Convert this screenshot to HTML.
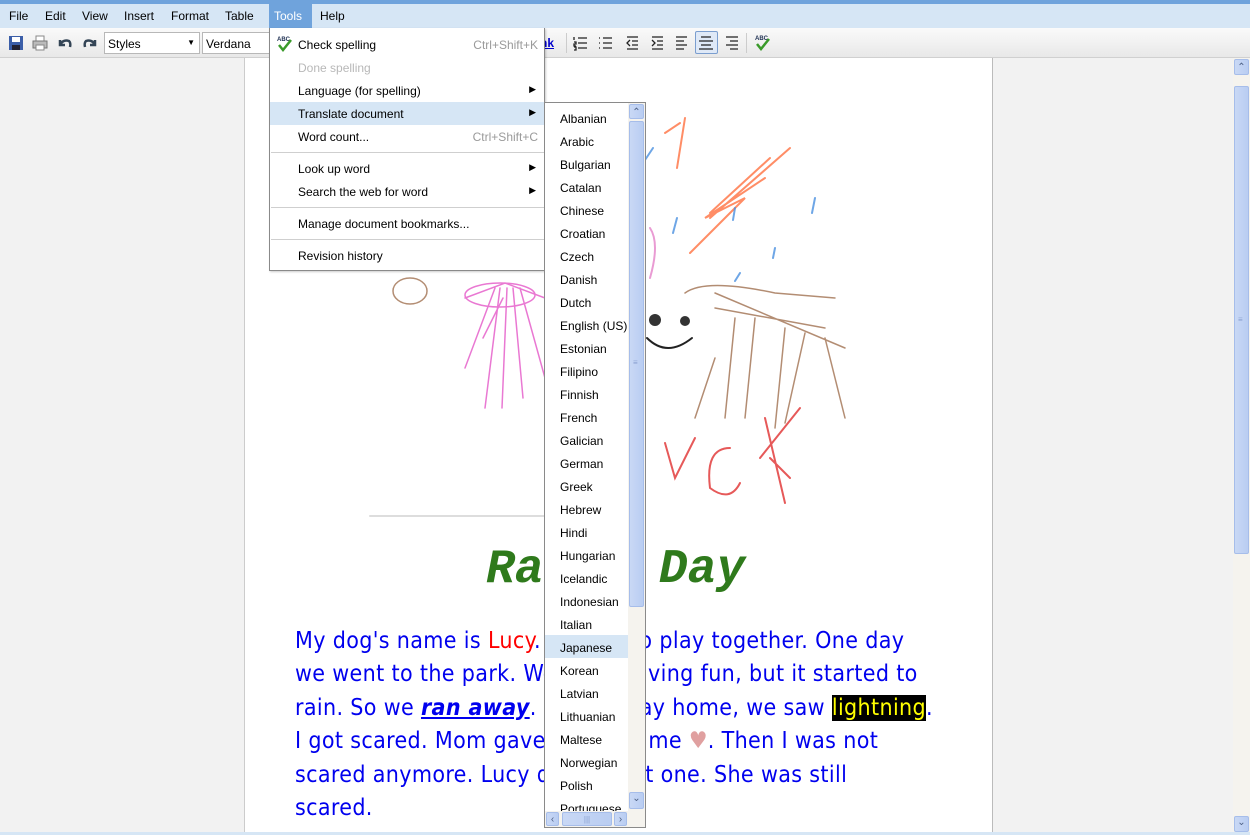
<!DOCTYPE html>
<html><head><meta charset="utf-8">
<style>
*{margin:0;padding:0;box-sizing:border-box}
body{width:1250px;height:835px;overflow:hidden;background:#f2f2f2;font-family:"Liberation Sans",Arial,sans-serif;font-size:12px;color:#000;position:relative}
.abs{position:absolute}
#topline{left:0;top:0;width:1250px;height:4px;background:#6fa3dc}
#menubar{left:0;top:4px;width:1250px;height:24px;background:#d6e6f5}
#menubar span{position:absolute;top:5px;font-size:12px}
#toolbar{left:0;top:28px;width:1250px;height:30px;background:linear-gradient(#fafafa,#e8e8e8);border-bottom:1px solid #d0d0d0}
.combo{position:absolute;top:4px;height:22px;background:#fff;border:1px solid #b8b8b8;font-size:12px;padding:4px 3px}
#page{left:244px;top:58px;width:749px;height:777px;background:#fff;border-left:1px solid #ccc;border-right:1px solid #bbb}
#vsb{left:1233px;top:58px;width:17px;height:776px;background:#f5f3ee}
.sbtn{position:absolute;background:linear-gradient(90deg,#c9d8f5,#b9cdf2);border:1px solid #a6bdea;border-radius:2px;color:#4d6185;font-size:10px;text-align:center}
#menu{left:269px;top:28px;width:276px;height:243px;background:#fff;border:1px solid #8a8a8a;border-top:none;box-shadow:1px 1px 2px rgba(0,0,0,.2)}
.mi{position:absolute;left:0;width:274px;height:23px;font-size:12px;padding:5px 0 0 28px}
.mi .sc{position:absolute;right:6px;top:5px;color:#9a9a9a}
.mi .ar{position:absolute;right:8px;top:5px;font-size:9px}
.sep{position:absolute;left:1px;width:273px;height:1px;background:#cfcfcf}
#sub{left:544px;top:102px;width:102px;height:726px;background:#fff;border:1px solid #8a8a8a}
.li{position:absolute;left:0;width:83px;height:23px;padding:6px 0 0 15px;font-size:12px;white-space:nowrap;overflow:hidden}
#text{left:295px;top:625px;width:700px;font-family:"Comic Sans MS","DejaVu Sans Condensed","Liberation Sans Narrow",sans-serif;font-size:23px;line-height:33.4px;color:#0000ee;letter-spacing:0.35px;white-space:nowrap}
#title{left:486px;top:543px;font-family:"Liberation Mono","Courier New",monospace;font-weight:bold;font-style:italic;font-size:48px;color:#2f7a1c}
</style></head><body>
<div id="topline" class="abs"></div>
<div id="menubar" class="abs">
<span style="left:9px">File</span><span style="left:45px">Edit</span><span style="left:82px">View</span><span style="left:124px">Insert</span><span style="left:171px">Format</span><span style="left:225px">Table</span>
<div style="position:absolute;left:269px;top:0;width:43px;height:24px;background:#6fa3dc"></div><span style="left:274px;color:#fff">Tools</span><span style="left:320px">Help</span>
</div>
<div id="toolbar" class="abs">
<svg class="abs" style="left:8px;top:7px" width="16" height="16"><rect x="1" y="1" width="14" height="14" fill="#3b5ea8"/><rect x="4" y="2" width="8" height="5" fill="#fff"/><rect x="4" y="10" width="8" height="5" fill="#223"/></svg>
<svg class="abs" style="left:32px;top:7px" width="16" height="16"><rect x="4" y="1" width="8" height="5" fill="#fff" stroke="#888"/><rect x="1" y="6" width="14" height="7" fill="#bbb" stroke="#777"/><rect x="4" y="10" width="8" height="5" fill="#fff" stroke="#888"/></svg>
<svg class="abs" style="left:57px;top:8px" width="16" height="14"><path d="M3 4 v5 h5 M3 9 Q6 3 12 5 Q14 7 13 11" stroke="#345" stroke-width="2.5" fill="none"/></svg>
<svg class="abs" style="left:82px;top:8px" width="16" height="14"><path d="M13 4 v5 h-5 M13 9 Q10 3 4 5 Q2 7 3 11" stroke="#345" stroke-width="2.5" fill="none"/></svg>
<div class="combo" style="left:104px;width:96px">Styles<span style="position:absolute;right:4px;top:5px;font-size:8px">▼</span></div>
<div class="combo" style="left:202px;width:70px">Verdana</div>
<span class="abs" style="left:540px;top:8px;color:#0000cc;font-weight:bold;text-decoration:underline;font-size:12px">nk</span>
<div class="abs" style="left:566px;top:5px;width:1px;height:20px;background:#ccc"></div>
<svg class="abs" style="left:572px;top:7px" width="170" height="16" stroke="#222" stroke-width="1.3" fill="none">
<path d="M6 3h9M6 8h9M6 13h9M2 2v3M2 7h2v2H2v2h2M2 12h2v3H2"/>
<path d="M31 3h9M31 8h9M31 13h9M27 3h1M27 8h1M27 13h1"/>
<path d="M55 2h11M60 6h6M60 10h6M55 14h11M58 5l-3 3 3 3"/>
<path d="M80 2h11M85 6h6M85 10h6M80 14h11M80 5l3 3-3 3"/>
<path d="M104 2h11M104 6h8M104 10h11M104 14h8"/>
<path d="M131 2h10M129 6h14M131 10h10M129 14h14"/>
<path d="M154 2h12M158 6h8M154 10h12M158 14h8"/>
</svg>
<div class="abs" style="left:695px;top:3px;width:23px;height:23px;border:1px solid #7b9ecf;background:#dfe9f7;border-radius:2px"></div>
<svg class="abs" style="left:698px;top:7px" width="17" height="16" stroke="#222" stroke-width="1.3"><path d="M3 2h10M1 6h14M3 10h10M1 14h14"/></svg>
<div class="abs" style="left:746px;top:5px;width:1px;height:20px;background:#ccc"></div>
<svg class="abs" style="left:754px;top:5px" width="18" height="18"><text x="1" y="7" font-size="6" font-weight="bold" fill="#235" font-family="Liberation Sans">ABC</text><path d="M3 11l4 5 8-10" stroke="#3a9a2a" stroke-width="2.5" fill="none"/></svg>
</div>
<div id="page" class="abs">
<svg width="749" height="470" style="position:absolute;left:0;top:0" fill="none" stroke-linecap="round">
<g stroke="#ff7040" stroke-width="2" opacity=".8"><path d="M420 75l15-10 M440 60l-8 50M520 120l-60 40 40-20-55 55M525 100l-60 55M545 90l-80 70"/></g>
<g stroke="#4a90e0" stroke-width="2" opacity=".8"><path d="M408 90l-8 12M432 160l-4 15M490 150l-2 12M530 190l-2 10M570 140l-3 15M495 215l-5 8"/></g>
<g stroke="#e070c0" stroke-width="2" opacity=".7"><path d="M405 170q10 15 0 50"/></g>
<g stroke="#e040c0" stroke-width="1.5" opacity=".7"><path d="M220 240l40-15 40 15M255 230l-15 120M262 230l-5 120M268 230l10 110M275 230l25 90M250 230l-30 80M258 240l-20 40"/><ellipse cx="255" cy="237" rx="35" ry="12"/></g>
<g stroke="#a07050" stroke-width="1.5" opacity=".8"><ellipse cx="165" cy="233" rx="17" ry="13"/><path d="M440 235q20-15 90 0l60 5M470 235l130 55M470 250l110 20M490 260l-10 100M510 260l-10 100M540 270l-10 100M560 275l-20 90M470 300l-20 60M580 280l20 80"/><path d="M400 225q-30 5-40 50 5 50 40 55"/></g>
<g fill="#333"><circle cx="410" cy="262" r="6"/><circle cx="440" cy="263" r="5"/></g>
<path d="M402 280q20 20 45 0" stroke="#222" stroke-width="2"/>
<g stroke="#e03030" stroke-width="2" opacity=".8"><path d="M420 385l10 35 20-40M485 390q-25 0-20 40 20 15 30-5M520 360l20 85M515 400l40-50M525 400l20 20"/></g>
<path d="M125 458h230" stroke="#ddd" stroke-width="2"/>
</svg>
</div>
<div id="title" class="abs">Rainy Day</div>
<div id="text" class="abs">My dog's name is <span style="color:#ff0000">Lucy</span>. We like to play together. One day<br>we went to the park. We were having fun, but it started to<br>rain. So we <b><i><u>ran away</u></i></b>. On the way home, we saw <span style="background:#000;color:#ffff00">lightning</span>.<br>I got scared. Mom gave a hug to me <span style="color:#e0a0a0">♥</span>. Then I was not<br>scared anymore. Lucy did not get one. She was still<br>scared.</div>
<div id="vsb" class="abs">
<div class="sbtn" style="left:1px;top:1px;width:15px;height:16px;line-height:16px">⌃</div>
<div class="sbtn" style="left:1px;top:28px;width:15px;height:468px"><span style="position:absolute;top:228px;left:3px;font-size:8px;color:#8aa0d0">≡</span></div>
<div class="sbtn" style="left:1px;top:758px;width:15px;height:16px;line-height:12px">⌄</div>
</div>
<div class="abs" style="left:0;top:832px;width:1250px;height:3px;background:#d6e6f5"></div>
<div id="menu" class="abs">
<svg class="abs" style="left:6px;top:7px" width="18" height="18"><text x="1" y="6" font-size="6" font-weight="bold" fill="#235" font-family="Liberation Sans">ABC</text><path d="M3 10l4 5 8-10" stroke="#3a9a2a" stroke-width="2.5" fill="none"/></svg>
<div class="mi" style="top:5px">Check spelling<span class="sc">Ctrl+Shift+K</span></div>
<div class="mi" style="top:28px;color:#b8b8b8">Done spelling</div>
<div class="mi" style="top:51px">Language (for spelling)<span class="ar">▶</span></div>
<div class="mi" style="top:74px;background:#d6e6f5">Translate document<span class="ar">▶</span></div>
<div class="mi" style="top:97px">Word count...<span class="sc">Ctrl+Shift+C</span></div>
<div class="sep" style="top:124px"></div>
<div class="mi" style="top:129px">Look up word<span class="ar">▶</span></div>
<div class="mi" style="top:152px">Search the web for word<span class="ar">▶</span></div>
<div class="sep" style="top:179px"></div>
<div class="mi" style="top:184px">Manage document bookmarks...</div>
<div class="sep" style="top:211px"></div>
<div class="mi" style="top:216px">Revision history</div>
</div>
<div id="sub" class="abs">
<div class="li" style="top:3px">Albanian</div><div class="li" style="top:26px">Arabic</div><div class="li" style="top:49px">Bulgarian</div><div class="li" style="top:72px">Catalan</div><div class="li" style="top:95px">Chinese</div><div class="li" style="top:118px">Croatian</div><div class="li" style="top:141px">Czech</div><div class="li" style="top:164px">Danish</div><div class="li" style="top:187px">Dutch</div><div class="li" style="top:210px">English (US)</div><div class="li" style="top:233px">Estonian</div><div class="li" style="top:256px">Filipino</div><div class="li" style="top:279px">Finnish</div><div class="li" style="top:302px">French</div><div class="li" style="top:325px">Galician</div><div class="li" style="top:348px">German</div><div class="li" style="top:371px">Greek</div><div class="li" style="top:394px">Hebrew</div><div class="li" style="top:417px">Hindi</div><div class="li" style="top:440px">Hungarian</div><div class="li" style="top:463px">Icelandic</div><div class="li" style="top:486px">Indonesian</div><div class="li" style="top:509px">Italian</div><div class="li" style="top:532px;background:#d6e6f5">Japanese</div><div class="li" style="top:555px">Korean</div><div class="li" style="top:578px">Latvian</div><div class="li" style="top:601px">Lithuanian</div><div class="li" style="top:624px">Maltese</div><div class="li" style="top:647px">Norwegian</div><div class="li" style="top:670px">Polish</div><div class="li" style="top:693px;height:15px">Portuguese</div>
<div class="abs" style="left:83px;top:0;width:17px;height:708px;background:#f5f3ee"></div>
<div class="sbtn" style="left:84px;top:1px;width:15px;height:15px;line-height:15px">⌃</div>
<div class="sbtn" style="left:84px;top:18px;width:15px;height:486px"><span style="position:absolute;top:236px;left:3px;font-size:8px;color:#8aa0d0">≡</span></div>
<div class="sbtn" style="left:84px;top:689px;width:15px;height:17px;line-height:12px">⌄</div>
<div class="abs" style="left:0;top:708px;width:100px;height:16px;background:#f5f3ee"></div>
<div class="sbtn" style="left:1px;top:709px;width:13px;height:14px;line-height:13px">‹</div>
<div class="sbtn" style="left:17px;top:709px;width:50px;height:14px;line-height:13px;font-size:8px;color:#8aa0d0">|||</div>
<div class="sbtn" style="left:69px;top:709px;width:13px;height:14px;line-height:13px">›</div>
</div>
</body></html>
